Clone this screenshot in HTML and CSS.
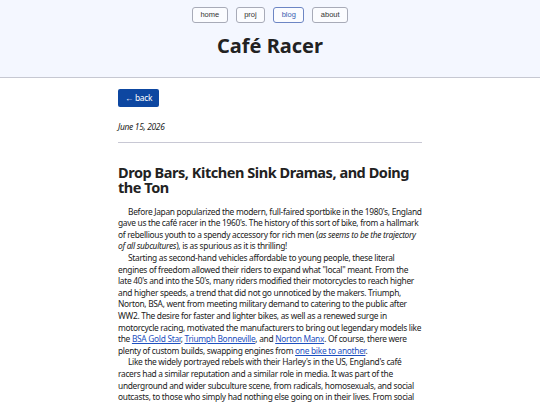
FILE: index.html
```html
<html>

<head>
	<title>Café Racer</title>
	<meta name="viewport" content="width=device-width, initial-scale=1">
	<meta http-equiv="Content-Type" content="text/html; charset=UTF-8">
	<link rel="stylesheet" href="styles.css">
</head>

<body>
	<div class="header">
		<div class="nav">
			<a class="navbtn" href="#">home</a>
			<a class="navbtn" href="#">proj</a>
			<a class="navbtn current" href="#">blog</a>
			<a class="navbtn" href="#">about</a>
		</div>
		<div class="sitetitle">Café Racer</div>
	</div>

	<div class="page">
		<div class="backline">
			<a class="back" href="#">&larr; back</a>
		</div>
		<div class="date">June 15, 2026</div>
		<hr>
		<h1>Drop Bars, Kitchen Sink Dramas, and Doing the Ton</h1>
		<p>Before Japan popularized the modern, full-faired sportbike in the 1980's, England gave us the café racer in
			the 1960's. The history of this sort of bike, from a hallmark of rebellious youth to a spendy accessory for
			rich men (<i>as seems to be the trajectory of all subcultures</i>), is as spurious as it is thrilling!</p>
		<p>Starting as second-hand vehicles affordable to young people, these literal engines of freedom allowed their
			riders to expand what "local" meant. From the late 40's and into the 50's, many riders modified their
			motorcycles to reach higher and higher speeds, a trend that did not go unnoticed by the makers. Triumph,
			Norton, BSA, went from meeting military demand to catering to the public after WW2. The desire for faster
			and lighter bikes, as well as a renewed surge in motorcycle racing, motivated the manufacturers to bring out
			legendary models like the <a href="#">BSA Gold Star</a>, <a href="#">Triumph Bonneville</a>, and <a
				href="#">Norton Manx</a>. Of course, there were plenty of custom builds, swapping engines from <a
				href="#">one bike to another</a>.</p>
		<p>Like the widely portrayed rebels with their Harley's in the US, England's café racers had a similar
			reputation and a similar role in media. It was part of the underground and wider subculture scene, from
			radicals, homosexuals, and social outcasts, to those who simply had nothing else going on in their lives.
			From social clubs to cafés, the riders gathered wherever the road took them.</p>
	</div>
</body>

</html>
```

FILE: styles.css
```css
body {
	margin: 0;
	font-family: "Noto Sans", sans-serif;
	color: #222;
	background: #fff;
}

.header {
	background: #f4f7ff;
	border-bottom: 1px solid #c6c8d2;
	height: 78px;
	padding-top: 7px;
	box-sizing: border-box;
}

.nav {
	display: flex;
	justify-content: center;
	gap: 8px;
}

.navbtn {
	font-family: "Liberation Sans", sans-serif;
	font-size: 7.5px;
	color: #333;
	text-decoration: none;
	border: 1px solid #a8abb8;
	border-radius: 3px;
	background: #fbfcff;
	padding: 0 7.5px;
	line-height: 14px;
}

.navbtn.current {
	color: #3a5db0;
	border-color: #6d86c4;
}

.sitetitle {
	text-align: center;
	font-weight: bold;
	font-size: 20px;
	line-height: 28px;
	margin-top: 9px;
	color: #222;
}

.page {
	width: 304px;
	margin: 0 auto;
	padding-top: 11px;
	font-size: 8.4px;
	letter-spacing: -0.3px;
	line-height: 11.6px;
}

.backline {
	display: flex;
}

.back {
	display: inline-block;
	background: #0d47a1;
	color: #fff;
	text-decoration: none;
	border-radius: 2px;
	padding: 1px 7px;
	line-height: 16px;
}

.date {
	font-style: italic;
	margin-top: 14px;
}

hr {
	border: none;
	border-top: 1px solid #c8c8d4;
	margin: 9px 0 0 0;
}

h1 {
	font-size: 14.5px;
	letter-spacing: -0.45px;
	line-height: 15px;
	margin: 22px 0 11px 0;
}

p {
	margin: 0;
	text-indent: 10px;
}

a {
	color: #1e50c0;
}
```
